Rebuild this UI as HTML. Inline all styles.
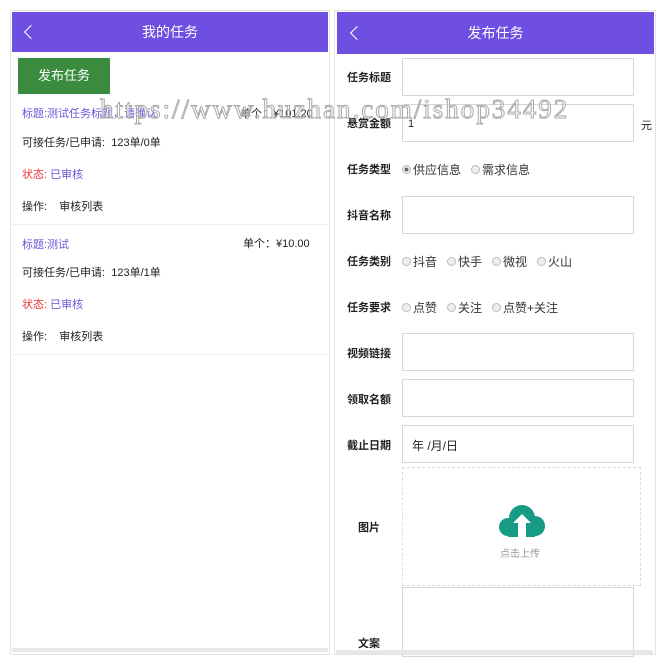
<!DOCTYPE html>
<html><head><meta charset="utf-8"><style>
*{margin:0;padding:0;box-sizing:border-box}
body{width:665px;height:665px;background:#fff;position:relative;overflow:hidden;font-family:"Liberation Sans","Noto Sans CJK SC",sans-serif;font-size:11px;color:#222}
.a{position:absolute}
.panel{position:absolute;border:1px solid #e4e4e4;background:#fff}
.hd{position:absolute;background:#6f4ee2;color:#fff;font-size:14px;text-align:center}
.chev{position:absolute;width:10px;height:10px;border-left:1.6px solid #fff;border-bottom:1.6px solid #fff;transform:rotate(45deg)}
.lab{position:absolute;left:347px;font-weight:bold;font-size:11px}
.inp{position:absolute;left:402px;width:232px;height:38px;border:1px solid #d6d6d6}
.rad{display:inline-block;width:9px;height:9px;border-radius:50%;border:1px solid #bbb;background:#eee;margin-right:2px;vertical-align:0}
.opt{position:absolute;font-size:12px;color:#333}
.p{color:#6a55d8}
</style></head><body>
<div class="panel" style="left:10px;top:10px;width:320px;height:645px"></div>
<div class="panel" style="left:334px;top:10px;width:322px;height:645px"></div>
<div class="hd" style="left:12px;top:12px;width:316px;height:40px;line-height:40px">我的任务</div>
<div class="chev" style="left:26px;top:27px"></div>
<div class="hd" style="left:337px;top:12px;width:317px;height:42px;line-height:42px">发布任务</div>
<div class="chev" style="left:352px;top:28px"></div>

<div class="a" style="left:18px;top:58px;width:92px;height:36px;background:#3a8b3e;color:#fff;font-size:13px;line-height:36px;text-align:center">发布任务</div>
<div class="a p" style="left:22px;top:105px">标题:测试任务标题，请确认</div>
<div class="a" style="left:240px;top:105px">单个：¥101.20</div>
<div class="a" style="left:22px;top:134px">可接任务/已申请:&nbsp; 123单/0单</div>
<div class="a" style="left:22px;top:166px"><span style="color:#e33">状态:</span> <span class="p">已审核</span></div>
<div class="a" style="left:22px;top:198px">操作:&nbsp;&nbsp;&nbsp; 审核列表</div>
<div class="a" style="left:12px;top:224px;width:316px;height:1px;background:#eee"></div>
<div class="a p" style="left:22px;top:236px">标题:测试</div>
<div class="a" style="left:243px;top:235px">单个：¥10.00</div>
<div class="a" style="left:22px;top:264px">可接任务/已申请:&nbsp; 123单/1单</div>
<div class="a" style="left:22px;top:296px"><span style="color:#e33">状态:</span> <span class="p">已审核</span></div>
<div class="a" style="left:22px;top:328px">操作:&nbsp;&nbsp;&nbsp; 审核列表</div>
<div class="a" style="left:12px;top:354px;width:316px;height:1px;background:#eee"></div>
<div class="a" style="left:12px;top:648px;width:316px;height:4px;background:#e8e8e8"></div>

<div class="lab" style="top:69px">任务标题</div><div class="inp" style="top:58px"></div>
<div class="lab" style="top:115px">悬赏金额</div><div class="inp" style="top:104px;padding:13px 0 0 5px">1</div>
<div class="a" style="left:641px;top:117px">元</div>
<div class="lab" style="top:161px">任务类型</div>
<div class="opt" style="left:402px;top:161px"><span class="rad" style="background:radial-gradient(#666 35%,#eee 45%)"></span>供应信息&nbsp;&nbsp;&nbsp;<span class="rad"></span>需求信息</div>
<div class="lab" style="top:207px">抖音名称</div><div class="inp" style="top:196px"></div>
<div class="lab" style="top:253px">任务类别</div>
<div class="opt" style="left:402px;top:253px"><span class="rad"></span>抖音&nbsp;&nbsp;&nbsp;<span class="rad"></span>快手&nbsp;&nbsp;&nbsp;<span class="rad"></span>微视&nbsp;&nbsp;&nbsp;<span class="rad"></span>火山</div>
<div class="lab" style="top:299px">任务要求</div>
<div class="opt" style="left:402px;top:299px"><span class="rad"></span>点赞&nbsp;&nbsp;&nbsp;<span class="rad"></span>关注&nbsp;&nbsp;&nbsp;<span class="rad"></span>点赞+关注</div>
<div class="lab" style="top:345px">视频链接</div><div class="inp" style="top:333px"></div>
<div class="lab" style="top:391px">领取名额</div><div class="inp" style="top:379px"></div>
<div class="lab" style="top:437px">截止日期</div><div class="inp" style="top:425px;padding:11px 0 0 9px;font-size:12px">年 /月/日</div>
<div class="a" style="left:402px;top:467px;width:239px;height:119px;border:1px dashed #ddd"></div>
<div class="lab" style="top:519px;left:358px">图片</div>
<svg class="a" style="left:498px;top:503px" width="48" height="34" viewBox="0 0 48 34"><circle cx="10" cy="24" r="9" fill="#179b85"/><circle cx="24" cy="15" r="13" fill="#179b85"/><circle cx="37" cy="23" r="10" fill="#179b85"/><rect x="10" y="20" width="27" height="14" fill="#179b85"/><path d="M24 11l-9 9h5v14h8v-14h5z" fill="#fff"/></svg>
<div class="a" style="left:500px;top:545px;color:#999;font-size:10px">点击上传</div>
<div class="a" style="left:402px;top:587px;width:232px;height:70px;border:1px solid #d6d6d6"></div>
<div class="lab" style="top:635px;left:358px">文案</div>
<div class="a" style="left:336px;top:650px;width:317px;height:4px;background:#e8e8e8"></div>

<div class="a" style="left:100px;top:94px;font-family:'Liberation Serif',serif;font-size:27px;color:rgba(255,255,255,0.3);-webkit-text-stroke:1px #aaa;letter-spacing:2px;white-space:nowrap">https://www.huzhan.com/ishop34492</div>
</body></html>
